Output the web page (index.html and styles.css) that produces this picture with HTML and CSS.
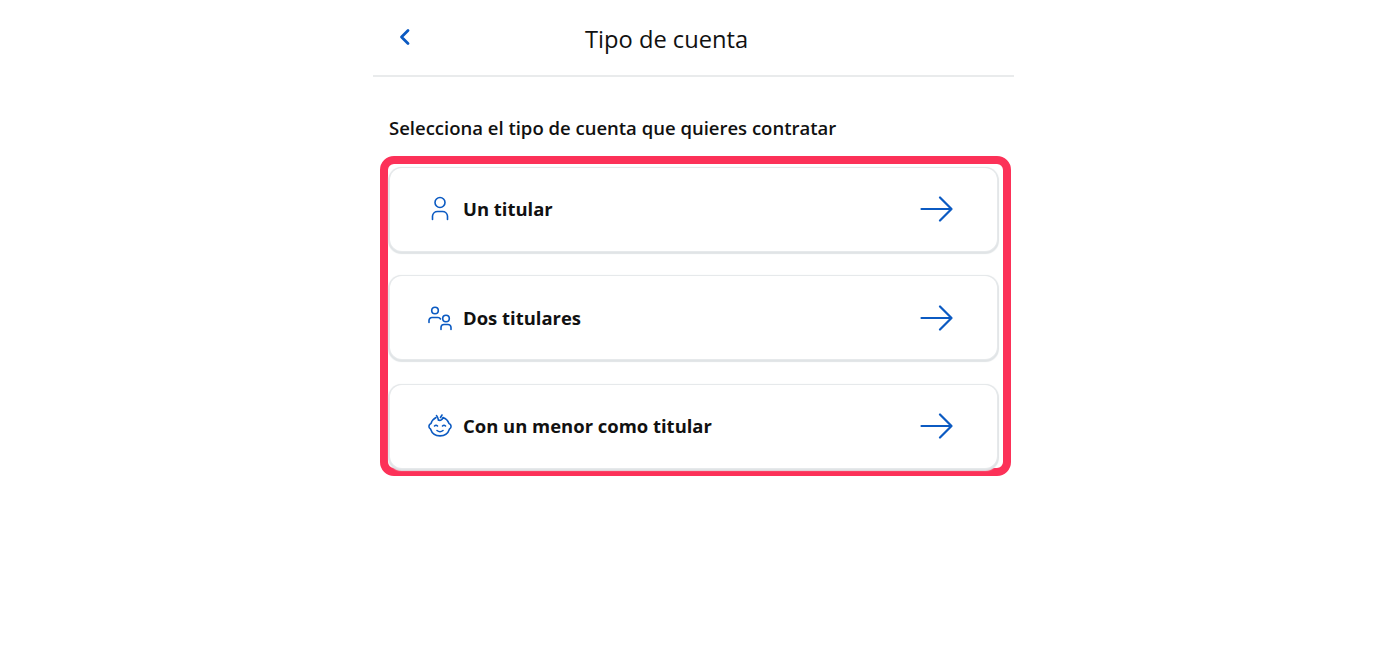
FILE: index.html
```html
<!DOCTYPE html>
<html lang="es">
<head>
    <meta charset="UTF-8">
    <title>Tipo de cuenta</title>
    <link rel="stylesheet" href="styles.css">
</head>
<body>
    <div class="screen">
        <header class="top-bar">
            <svg class="back-icon" width="14" height="20" viewBox="0 0 14 20" fill="none"><path d="M10 3.500 3.500 10l6.500 6.500" stroke="#0b5ac2" stroke-width="2.800" stroke-linecap="round" stroke-linejoin="round"/></svg>
            <h1 class="title">Tipo de cuenta</h1>
        </header>
        <p class="subtitle">Selecciona el tipo de cuenta que quieres contratar</p>
        <div class="highlight">
            <div class="card">
                <svg class="card-icon" width="28" height="28" viewBox="0 0 28 28" fill="none" stroke="#0b5ac2" stroke-width="1.600" stroke-linecap="round"><circle cx="14" cy="7.500" r="5"/><path d="M6.500 24.500v-3.500a5 5 0 0 1 5-4.500h5a5 5 0 0 1 5 4.500v3.500"/></svg>
                <span class="card-label">Un titular</span>
                <svg class="arrow" width="34" height="26" viewBox="0 0 34 26" fill="none" stroke="#0b5ac2" stroke-width="2.200" stroke-linecap="round" stroke-linejoin="round"><path d="M1.500 13h30M20 1.500 31.500 13 20 24.500"/></svg>
            </div>
            <div class="card">
                <svg class="card-icon" width="28" height="28" viewBox="0 0 28 28" fill="none" stroke="#0b5ac2" stroke-width="1.600" stroke-linecap="round"><circle cx="9" cy="6.500" r="3.300"/><path d="M3 18.500v-2a3 3 0 0 1 3-3h6a3 3 0 0 1 2.500 1.500"/><circle cx="20" cy="14.500" r="3.300"/><path d="M15 25.500v-2a3 3 0 0 1 3-3h4a3 3 0 0 1 3 3v2"/></svg>
                <span class="card-label">Dos titulares</span>
                <svg class="arrow" width="34" height="26" viewBox="0 0 34 26" fill="none" stroke="#0b5ac2" stroke-width="2.200" stroke-linecap="round" stroke-linejoin="round"><path d="M1.500 13h30M20 1.500 31.500 13 20 24.500"/></svg>
            </div>
            <div class="card">
                <svg class="card-icon" width="28" height="28" viewBox="0 0 28 28" fill="none" stroke="#0b5ac2" stroke-width="1.600" stroke-linecap="round" stroke-linejoin="round"><path d="M10 5.500A10 10 0 0 0 5 11.500a3 3 0 0 0-.5 5.500 10 10 0 0 0 19 0 3 3 0 0 0-.5-5.500 10 10 0 0 0-6-6c-.5 2-2.500 3.500-4.500 2.500"/><path d="M10.500 3.500c1 1 1.500 2.500 2 4.500M16 3l-1.500 2.500"/><path d="M8.500 14q1.500-1.500 3 0M16.500 14q1.500-1.500 3 0M11 18.500q3 2.500 6 0"/></svg>
                <span class="card-label">Con un menor como titular</span>
                <svg class="arrow" width="34" height="26" viewBox="0 0 34 26" fill="none" stroke="#0b5ac2" stroke-width="2.200" stroke-linecap="round" stroke-linejoin="round"><path d="M1.500 13h30M20 1.500 31.500 13 20 24.500"/></svg>
            </div>
        </div>
    </div>
</body>
</html>
```

FILE: styles.css
```css
body {
    margin: 0;
    background-color: #fff;
    color: #111;
    font-family: "Open Sans", sans-serif;
}
.screen {
    width: 641px;
    margin-left: 373px;
}
.top-bar {
    display: flex;
    align-items: center;
    height: 75px;
    padding-left: 25px;
    border-bottom: 2px solid #e9ebec;
}
.back-icon {
    margin-top: -2px;
}
.title {
    margin: 3px 0 0 173px;
    font-size: 23.700px;
    font-weight: 400;
}
.subtitle {
    margin: 38px 0 15px 16px;
    font-size: 18.500px;
    font-weight: 600;
    line-height: 26px;
}
.highlight {
    display: flex;
    flex-direction: column;
    gap: 25.500px;
    width: 631px;
    height: 320px;
    margin-left: 7px;
    padding: 3.500px 6px 0 2px;
    box-sizing: border-box;
    border: 8px solid #fc3158;
    border-radius: 14px;
}
.card {
    display: flex;
    align-items: center;
    height: 83px;
    flex-shrink: 0;
    box-sizing: border-box;
    padding: 0 43px 0 36px;
    background-color: #fff;
    border-radius: 12px;
    box-shadow: 0 0 0 1px #e6e9eb, 0 1px 1px 1.500px #e0e4e6;
}
.card-label {
    margin: -1px 0 0 9px;
    font-size: 18.450px;
    font-weight: 700;
}
.arrow {
    margin-left: auto;
}
```
